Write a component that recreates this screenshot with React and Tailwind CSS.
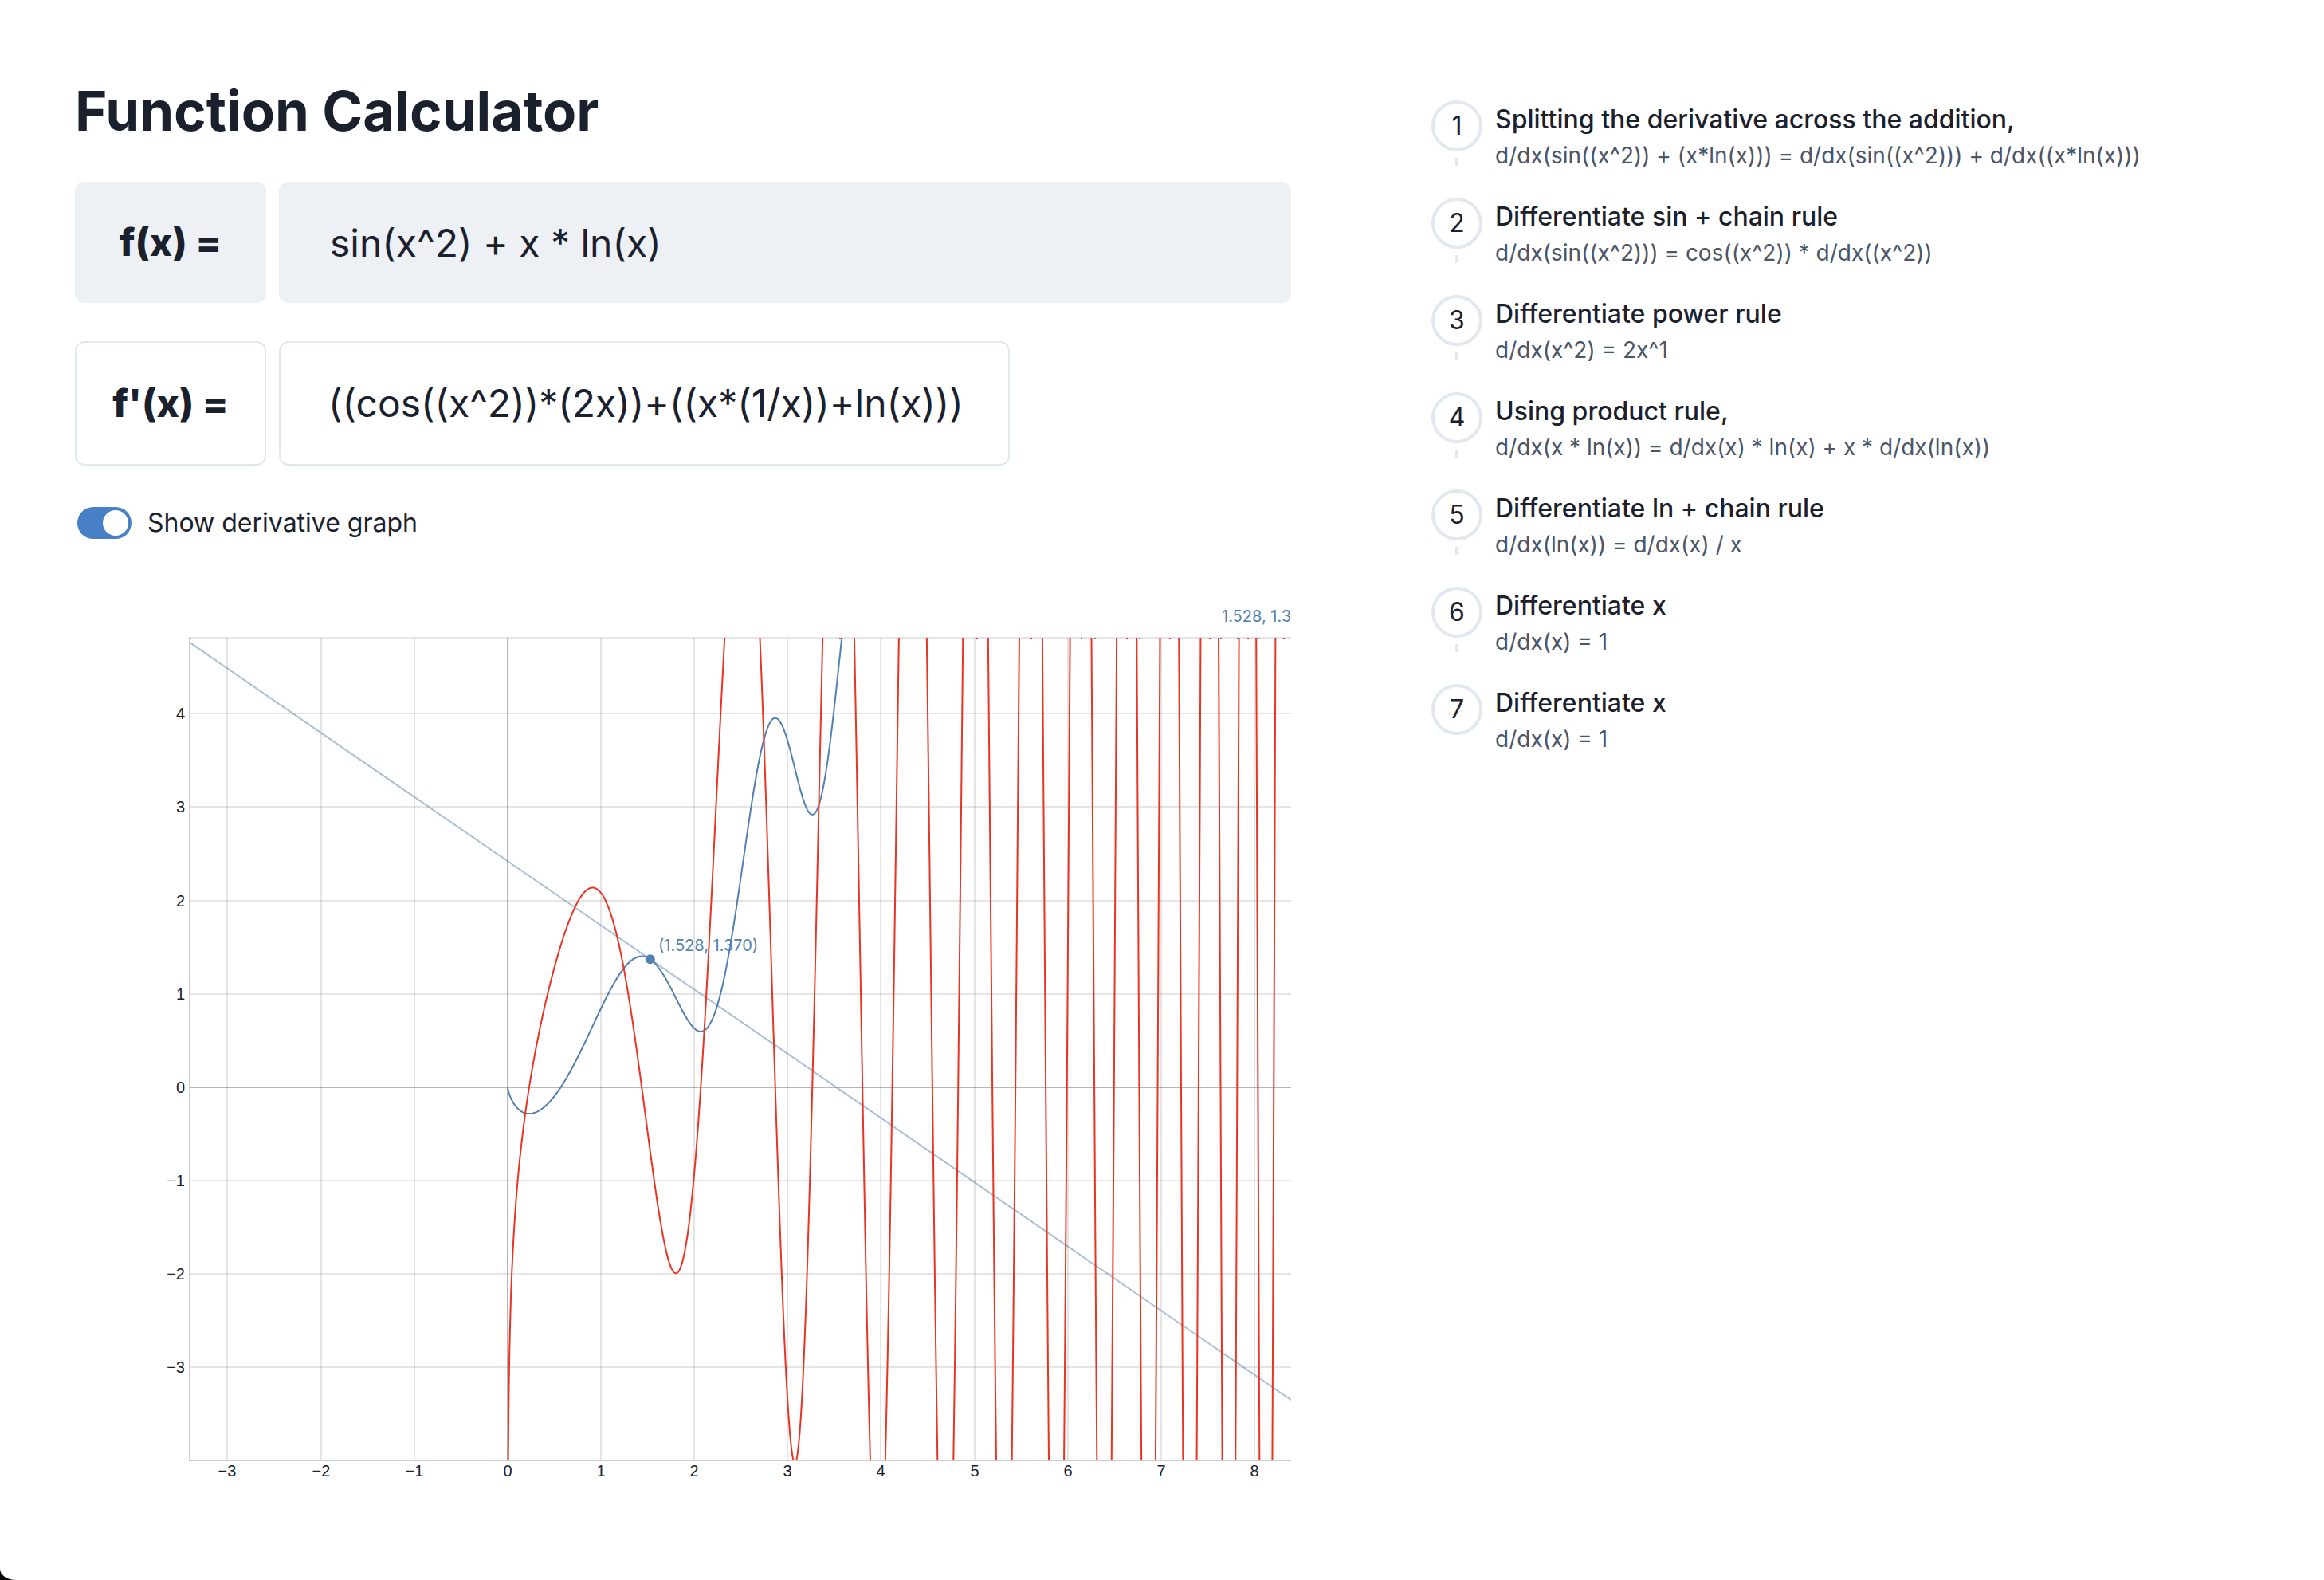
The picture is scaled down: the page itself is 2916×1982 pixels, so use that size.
import React, { useState } from 'react';

const STEPS = [
  ['Splitting the derivative across the addition,', 'd/dx(sin((x^2)) + (x*ln(x))) = d/dx(sin((x^2))) + d/dx((x*ln(x)))'],
  ['Differentiate sin + chain rule', 'd/dx(sin((x^2))) = cos((x^2)) * d/dx((x^2))'],
  ['Differentiate power rule', 'd/dx(x^2) = 2x^1'],
  ['Using product rule,', 'd/dx(x * ln(x)) = d/dx(x) * ln(x) + x * d/dx(ln(x))'],
  ['Differentiate ln + chain rule', 'd/dx(ln(x)) = d/dx(x) / x'],
  ['Differentiate x', 'd/dx(x) = 1'],
  ['Differentiate x', 'd/dx(x) = 1'],
];

// Plot area inside the chart's view box
const LEFT = 144;
const RIGHT = 1526;
const TOP = 72;
const BOTTOM = 1104;
const ORIGIN_X = 542.85;
const ORIGIN_Y = 635.7;
const UNIT_X = 117.15;
const UNIT_Y = 117.1;

const px = (x) => ORIGIN_X + x * UNIT_X;
const py = (y) => ORIGIN_Y - y * UNIT_Y;

const f = (x) => Math.sin(x * x) + x * Math.log(x);
const df = (x) => 2 * x * Math.cos(x * x) + 1 + Math.log(x);

function trace(fn, from, to, step) {
  const points = [];
  for (let x = from; x <= to; x += step) {
    points.push(`${px(x).toFixed(2)},${py(fn(x)).toFixed(2)}`);
  }
  return 'M' + points.join('L');
}

const X_TICKS = [-3, -2, -1, 0, 1, 2, 3, 4, 5, 6, 7, 8];
const Y_TICKS = [-3, -2, -1, 0, 1, 2, 3, 4];
const TIP_X = 1.5277;
const F_PATH = trace(f, 0.0005, 3.7, 0.005);
const DF_PATH = trace(df, 0.0005, 8.42, 0.0025);

// Stubs of the samples that lie outside the range, along the plot's edges
const RED_TOP = [959, 1131, 1199, 1262, 1319, 1373, 1423, 1471, 1516];
const BLUE_TOP = [1279, 1335, 1437, 1458, 1484, 1504];
const RED_BOTTOM = [1231, 1291, 1347, 1398, 1447, 1494];

const label = (n) => (n < 0 ? `−${-n}` : `${n}`);

function Graph({ showDerivative }) {
  const slope = df(TIP_X);
  const tangent = (x) => f(TIP_X) + slope * (x - TIP_X);
  return (
    <svg viewBox="0 0 1526 1160" className="mt-12 block h-auto w-full" role="img" aria-label="Function graph">
      <defs>
        <clipPath id="plot-area">
          <rect x={LEFT} y={TOP} width={RIGHT - LEFT} height={BOTTOM - TOP} />
        </clipPath>
      </defs>
      <g stroke="#000" strokeWidth="2" fill="none">
        <g strokeOpacity="0.1">
          {X_TICKS.map((n) => (
            <path key={n} d={`M${Math.round(px(n))} ${TOP}V${BOTTOM}`} />
          ))}
          {Y_TICKS.map((n) => (
            <path key={n} d={`M${LEFT} ${Math.round(py(n))}H${RIGHT}`} />
          ))}
          <path d={`M${LEFT - 1} ${TOP}H${RIGHT}`} />
        </g>
        <g strokeOpacity="0.2">
          <path d={`M${Math.round(ORIGIN_X)} ${TOP}V${BOTTOM}M${LEFT} ${Math.round(ORIGIN_Y)}H${RIGHT}`} />
          <path d={`M${LEFT} ${TOP}V${BOTTOM}H${RIGHT}`} />
        </g>
      </g>
      <g clipPath="url(#plot-area)" fill="none" strokeWidth="2">
        <path d={F_PATH} stroke="#5280b0" />
        <path
          d={`M${LEFT} ${py(tangent((LEFT - ORIGIN_X) / UNIT_X))}L${RIGHT} ${py(tangent((RIGHT - ORIGIN_X) / UNIT_X))}`}
          stroke="#5280b0"
          strokeOpacity="0.5"
        />
        {showDerivative && <path d={DF_PATH} stroke="#ea3323" />}
        {BLUE_TOP.map((x) => (
          <rect key={x} x={x} y={TOP} width="2" height="1" fill="#5280b0" />
        ))}
        {showDerivative && RED_TOP.map((x) => <rect key={x} x={x} y={TOP} width="2" height="1" fill="#ea3323" />)}
        {showDerivative && RED_BOTTOM.map((x) => <rect key={x} x={x} y={BOTTOM - 1} width="2" height="1" fill="#ea3323" />)}
      </g>
      <g className="font-['Liberation_Sans',Arial,sans-serif] text-[20px]" fill="#1a202c">
        {X_TICKS.map((n) => (
          <text key={n} x={Math.round(px(n))} y="1124" textAnchor="middle">{label(n)}</text>
        ))}
        {Y_TICKS.map((n) => (
          <text key={n} x="138" y={Math.round(py(n)) + 7} textAnchor="end">{label(n)}</text>
        ))}
      </g>
      <g className="text-[20px]" fill="#5280b0">
        <circle cx={px(TIP_X)} cy={py(f(TIP_X))} r="6" />
        <text x="732" y="465">(1.528, 1.370)</text>
        <text x="1526" y="52" textAnchor="end">1.528, 1.3</text>
      </g>
    </svg>
  );
}

export default function App() {
  const [expression, setExpression] = useState('sin(x^2) + x * ln(x)');
  const [showDerivative, setShowDerivative] = useState(true);
  return (
    <div className="bg-black font-[Inter,sans-serif] text-[#1a202c]">
      <div className="grid min-h-screen grid-cols-[1526fr_1026fr] items-start gap-x-[176px] rounded-bl-[20px_14px] bg-white px-[94px] pt-[94px]">
        <main className="min-w-0">
          <h1 className="text-[69px] leading-[90px] font-bold">Function Calculator</h1>
          <div className="mt-11 flex gap-4 text-5xl">
            <label htmlFor="fx" className="flex h-[152px] w-60 shrink-0 items-center justify-center rounded-xl bg-[#edf1f6] font-extrabold">
              f(x) =
            </label>
            <input
              id="fx"
              type="text"
              value={expression}
              onChange={(e) => setExpression(e.target.value)}
              className="h-[152px] min-w-0 flex-1 rounded-xl bg-[#edf1f6] px-16 outline-none"
            />
          </div>
          <div className="mt-12 flex gap-4 text-5xl">
            <label htmlFor="dfx" className="flex h-[156px] w-60 shrink-0 items-center justify-center rounded-xl border-2 border-[#e2e8f0] font-extrabold">
              f'(x) =
            </label>
            <output id="dfx" className="flex h-[156px] items-center rounded-xl border-2 border-[#e2e8f0] pr-14 pl-15">
              ((cos((x^2))*(2x))+((x*(1/x))+ln(x)))
            </output>
          </div>
          <div className="mt-12 flex h-12 items-center gap-5 pl-[3px]">
            <input
              id="show-derivative"
              type="checkbox"
              role="switch"
              checked={showDerivative}
              onChange={(e) => setShowDerivative(e.target.checked)}
              className="flex h-10 w-[68px] shrink-0 appearance-none rounded-full bg-[#cbd5e0] p-1 before:size-8 before:rounded-full before:bg-white checked:justify-end checked:bg-[#4880c8]"
            />
            <label htmlFor="show-derivative" className="text-[32px] leading-[48px]">Show derivative graph</label>
          </div>
          <Graph showDerivative={showDerivative} />
        </main>
        <ol className="mt-8 flex min-w-0 flex-col gap-8">
          {STEPS.map(([title, detail], i) => (
            <li key={i} className="flex gap-4">
              <div className="flex flex-col items-center gap-2 pb-2">
                <span className="flex size-16 shrink-0 items-center justify-center rounded-full border-4 border-[#e2e8f0] text-[32px]">
                  {i + 1}
                </span>
                {i < STEPS.length - 1 && <span className="w-1 flex-1 bg-[#e2e8f0]" />}
              </div>
              <div className="whitespace-nowrap">
                <h2 className="text-[32px] leading-[48px] font-medium">{title}</h2>
                <p className="text-[28px] leading-[42px] text-[#4a5568]">{detail}</p>
              </div>
            </li>
          ))}
        </ol>
      </div>
    </div>
  );
}
